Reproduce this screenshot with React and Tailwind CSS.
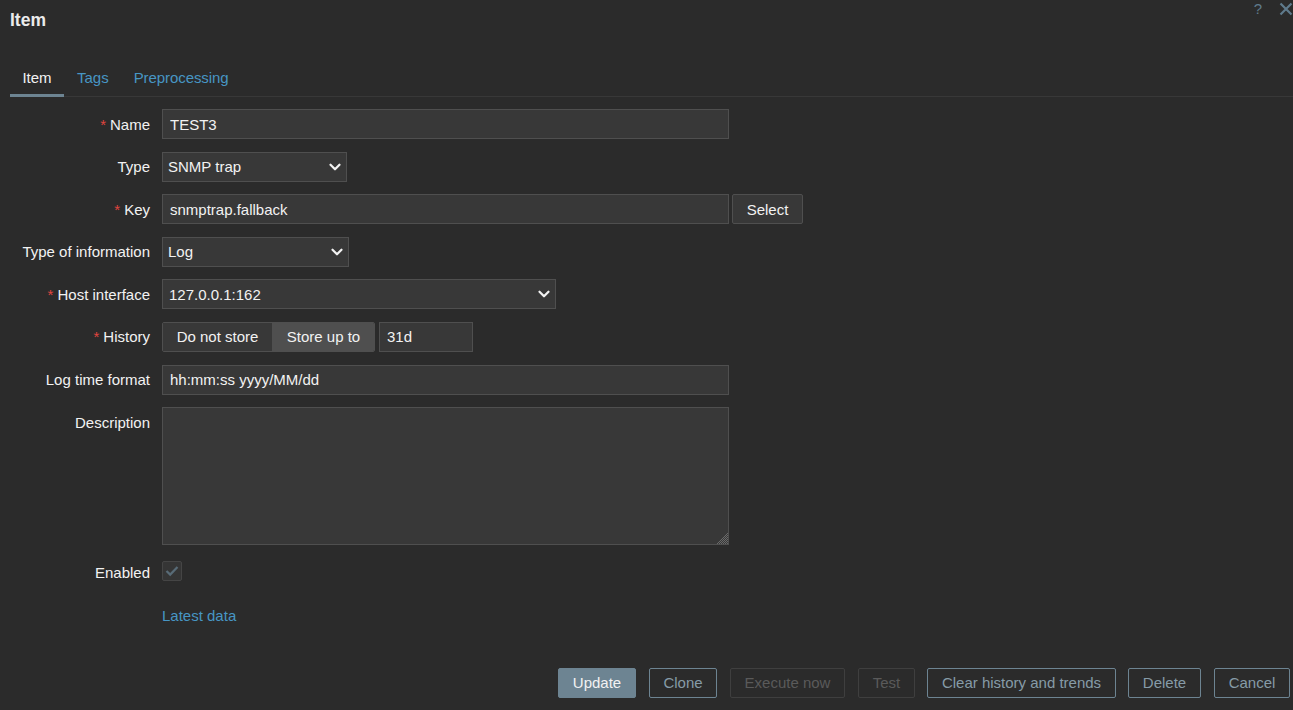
import { ChevronDown } from "lucide-react";

const FONT = "font-['Liberation_Sans',Arial,sans-serif]";

function Label({ text, required }) {
  return (
    <div className="w-[150px] shrink-0 h-[30px] pt-[1.5px] flex items-center justify-end text-right">
      {required && <span className="text-[#e0453f] mr-1">*</span>}
      {text}
    </div>
  );
}

function Row({ label, required, children }) {
  return (
    <div className="flex gap-3 items-start">
      <Label text={label} required={required} />
      {children}
    </div>
  );
}

function TextInput({ value, className }) {
  return (
    <input
      readOnly
      value={value}
      className={`h-[30px] bg-[#383838] border border-[#4f4f4f] px-[7px] outline-none text-[#f2f2f2] ${className}`}
    />
  );
}

function Select({ value, className }) {
  return (
    <div className={`relative h-[30px] bg-[#383838] border border-[#4f4f4f] pl-[5px] pt-[1px] flex items-center ${className}`}>
      {value}
      <ChevronDown
        className="absolute right-[2px] top-[5px] w-[18px] h-[18px] text-[#f2f2f2]"
        strokeWidth={3}
      />
    </div>
  );
}

function FooterButton({ children, className, variant = "outline" }) {
  const styles = {
    primary: "bg-[#6d8492] border-[#6d8492] text-[#f2f2f2]",
    outline: "border-[#6d8492] text-[#869ba7]",
    disabled: "border-[#3f3f3f] text-[#5a5a5a]",
  };
  return (
    <button className={`h-[30px] border rounded-[2px] ${styles[variant]} ${className}`}>
      {children}
    </button>
  );
}

export default function App() {
  return (
    <div className={`h-screen overflow-hidden bg-[#2b2b2b] text-[#f2f2f2] text-[15px] flex flex-col ${FONT}`}>
      {/* Header */}
      <div className="h-[40px] pl-[10px] flex justify-between items-start">
        <h1 className="text-[17.5px] font-bold text-[#ebebeb] mt-[9px] leading-[22px]">Item</h1>
        <div className="flex items-center gap-[17px] text-[#5f7a8c]">
          <span className="text-[15px] leading-[18px]">?</span>
          <svg width="14" height="14" viewBox="0 0 14 14">
            <path d="M1.5 1.5 12.5 12.5M12.5 1.5 1.5 12.5" stroke="currentColor" strokeWidth="2.2" fill="none" />
          </svg>
        </div>
      </div>

      {/* Tabs */}
      <div className="ml-[10px] mt-[18px] h-[39px] flex border-b border-[#383838]">
        <div className="w-[54px] h-[39px] pt-[5px] flex items-center justify-center border-b-[3px] border-[#6d8492] text-[#f2f2f2]">Item</div>
        <div className="h-[39px] pl-[13px] pr-[12px] pt-[2px] flex items-center text-[#4796c4]">Tags</div>
        <div className="h-[39px] pl-[13px] pt-[2px] flex items-center text-[#4796c4] tracking-[-0.08px]">Preprocessing</div>
      </div>

      {/* Form */}
      <div className="mt-[12px] flex flex-col gap-[12.6px]">
        <Row label="Name" required>
          <TextInput value="TEST3" className="w-[567px]" />
        </Row>
        <Row label="Type">
          <Select value="SNMP trap" className="w-[185px]" />
        </Row>
        <Row label="Key" required>
          <div className="flex gap-[3px]">
            <TextInput value="snmptrap.fallback" className="w-[567px]" />
            <button className="w-[71px] h-[30px] pt-[2px] bg-[#383838] border border-[#4f4f4f] rounded-[2px]">Select</button>
          </div>
        </Row>
        <Row label="Type of information">
          <Select value="Log" className="w-[187px]" />
        </Row>
        <Row label="Host interface" required>
          <Select value="127.0.0.1:162" className="w-[394px] pl-[6px]" />
        </Row>
        <Row label="History" required>
          <div className="flex gap-[4px]">
            <div className="flex h-[30px] w-[213px] rounded-[2px] border border-[#4f4f4f] overflow-hidden">
              <div className="w-[109px] pt-[1px] flex items-center justify-center bg-[#383838]">Do not store</div>
              <div className="flex-1 pt-[1px] pl-[1px] flex items-center justify-center bg-[#4f4f4f]">Store up to</div>
            </div>
            <TextInput value="31d" className="w-[94px]" />
          </div>
        </Row>
        <Row label="Log time format">
          <TextInput value="hh:mm:ss yyyy/MM/dd" className="w-[567px]" />
        </Row>
        <Row label="Description">
          <div className="relative w-[567px] h-[138px]">
            <textarea readOnly className="w-full h-full resize-none bg-[#383838] border border-[#4f4f4f] outline-none block" />
            {/* resize grip */}
            <svg width="12" height="12" viewBox="0 0 12 12" className="absolute right-[1px] bottom-[1px]">
              <defs>
                <pattern id="grip" width="2" height="2" patternUnits="userSpaceOnUse">
                  <rect width="1" height="1" fill="#6a6a6a" />
                  <rect x="1" y="1" width="1" height="1" fill="#6a6a6a" />
                </pattern>
              </defs>
              <polygon points="12,0 12,12 0,12" fill="url(#grip)" />
            </svg>
          </div>
        </Row>
        <Row label="Enabled">
          <div className="w-[20px] h-[20px] mt-[3.5px] bg-[#353535] border border-[#454545] rounded-[2px] flex items-center justify-center">
            <svg width="14" height="12" viewBox="0 0 14 12">
              <path d="M1.5 6 5.2 9.6 12.5 2" stroke="#586b77" strokeWidth="2.2" fill="none" />
            </svg>
          </div>
        </Row>
        <div className="pl-[162px] h-[30px] pt-[1px] flex items-center text-[#4796c4]">Latest data</div>
      </div>

      {/* Footer */}
      <div className="mt-auto mb-[12px] pr-[3px] flex justify-end gap-3">
        <FooterButton variant="primary" className="w-[78px] mr-[1px]">Update</FooterButton>
        <FooterButton className="w-[68px] mr-[1px]">Clone</FooterButton>
        <FooterButton variant="disabled" className="w-[115px] mr-[1px]">Execute now</FooterButton>
        <FooterButton variant="disabled" className="w-[57px]">Test</FooterButton>
        <FooterButton className="w-[189px]">Clear history and trends</FooterButton>
        <FooterButton className="w-[73px] mr-[1px]">Delete</FooterButton>
        <FooterButton className="w-[76px]">Cancel</FooterButton>
      </div>
    </div>
  );
}
